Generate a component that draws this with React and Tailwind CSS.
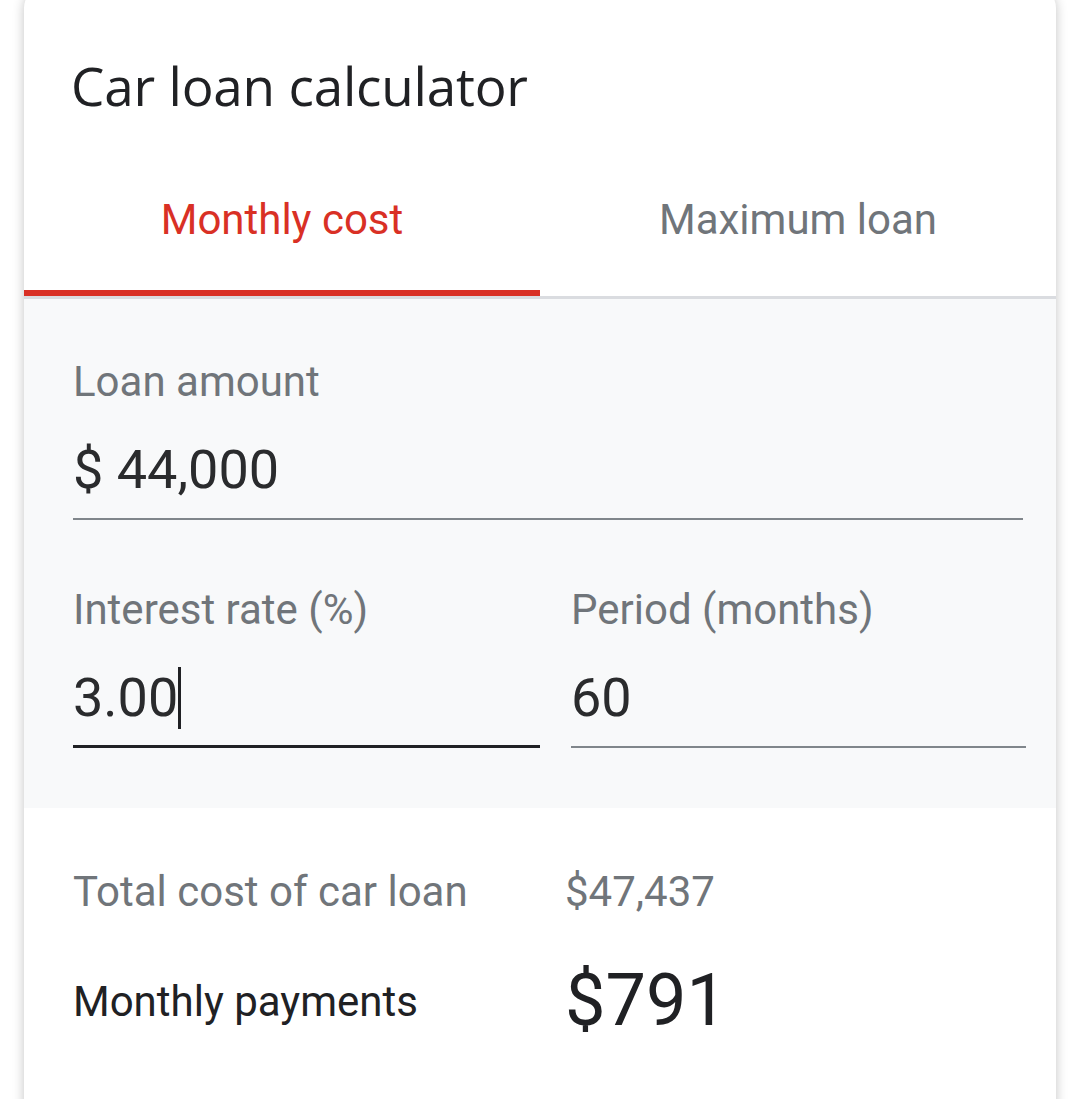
export default function App() {
  return (
    <div className="w-[1080px] h-[1099px] bg-white overflow-hidden" style={{ fontFamily: "Roboto, 'Liberation Sans', sans-serif" }}>
      <div className="ml-[24px] mt-[-14px] w-[1032px] h-[1140px] bg-white rounded-[22px] shadow-[0_2px_12px_rgba(0,0,0,0.24)] overflow-hidden">
        <div className="h-[162px] pl-[47px] pt-[70px]">
          <h1 className="text-[53px] leading-[60px] text-[#202124] font-normal tracking-[-0.2px]" style={{ fontFamily: "'Open Sans', sans-serif" }}>Car loan calculator</h1>
        </div>
        <div className="flex h-[151px] border-b-[3px] border-[#dadce0]">
          <div className="w-[516px] flex flex-col">
            <div className="flex-1 flex items-center justify-center text-[42px] text-[#d93025]">Monthly cost</div>
            <div className="h-[6px] bg-[#d93025]"></div>
          </div>
          <div className="flex-1 flex flex-col">
            <div className="flex-1 flex items-center justify-center text-[42px] text-[#70757a]">Maximum loan</div>
            <div className="h-[6px]"></div>
          </div>
        </div>
        <div className="bg-[#f8f9fa] h-[509px] px-[49px] pt-[59px]">
          <div className="text-[42px] leading-[48px] text-[#70757a]">Loan amount</div>
          <div className="mt-[34px] text-[54px] leading-[60px] text-[#2a2b2d] h-[78px]">$ 44,000</div>
          <div className="h-[2px] bg-[#80868b] w-[950px]"></div>
          <div className="flex mt-[66px]">
            <div className="w-[467px] shrink-0">
              <div className="text-[42px] leading-[48px] text-[#70757a]">Interest rate (%)</div>
              <div className="mt-[34px] h-[77px] text-[54px] leading-[60px] text-[#2a2b2d] flex items-start">
                <span>3.00</span>
                <span className="inline-block w-[3px] h-[62px] bg-[#202124] mt-[-1px]"></span>
              </div>
              <div className="h-[3px] bg-[#202124]"></div>
            </div>
            <div className="ml-[31px] w-[455px] shrink-0">
              <div className="text-[42px] leading-[48px] text-[#70757a]">Period (months)</div>
              <div className="mt-[34px] h-[77px] text-[54px] leading-[60px] text-[#2a2b2d]">60</div>
              <div className="h-[2px] bg-[#80868b] mt-[1px]"></div>
            </div>
          </div>
        </div>
        <div className="px-[49px] pt-[58px]">
          <div className="flex items-center h-[50px]">
            <div className="w-[492px] text-[42px] text-[#70757a]">Total cost of car loan</div>
            <div className="text-[42px] text-[#70757a]">$47,437</div>
          </div>
          <div className="flex items-center h-[80px] mt-[45px]">
            <div className="w-[492px] text-[42px] text-[#202124]">Monthly payments</div>
            <div className="text-[72px] text-[#202124]">$791</div>
          </div>
        </div>
      </div>
    </div>
  );
}
